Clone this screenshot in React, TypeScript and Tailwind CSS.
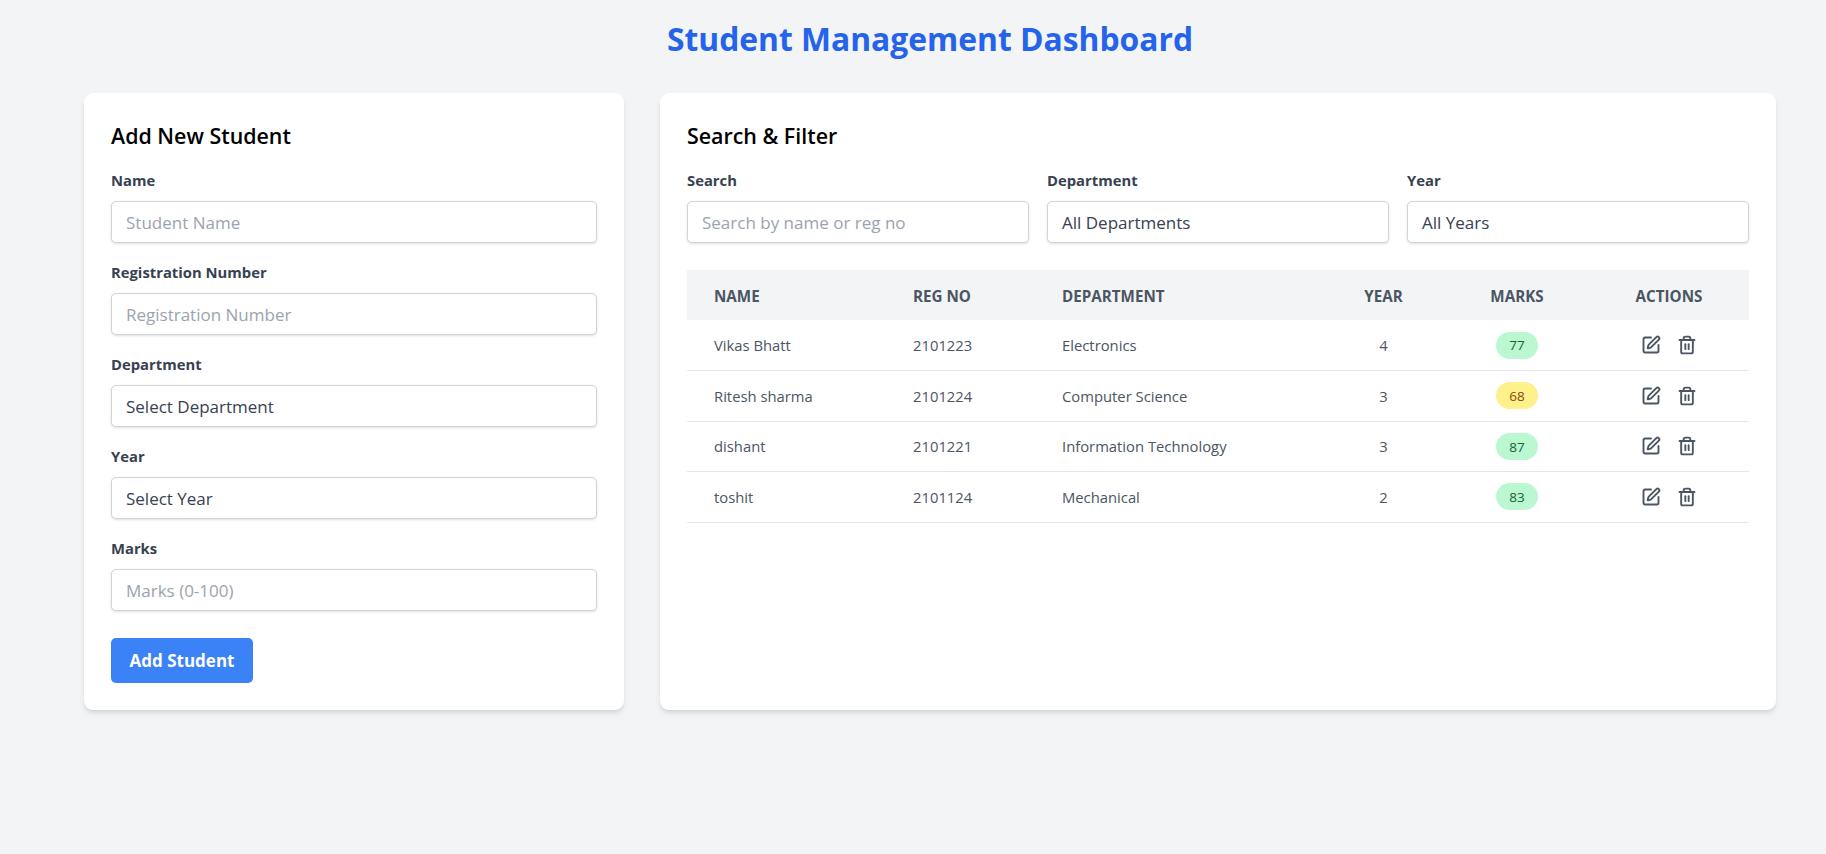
import { SquarePen, Trash2 } from "lucide-react";

const students = [
  { name: "Vikas Bhatt", reg: "2101223", dept: "Electronics", year: 4, marks: 77 },
  { name: "Ritesh sharma", reg: "2101224", dept: "Computer Science", year: 3, marks: 68 },
  { name: "dishant", reg: "2101221", dept: "Information Technology", year: 3, marks: 87 },
  { name: "toshit", reg: "2101124", dept: "Mechanical", year: 2, marks: 83 },
];

function Field({ label, children, className }: { label: string; children: React.ReactNode; className?: string }) {
  return (
    <div className={className}>
      <label className="block h-6 mb-2 text-[14.8px] leading-[22px] font-bold text-[#374151]">{label}</label>
      {children}
    </div>
  );
}

const boxClass =
  "w-full h-[42px] px-[14px] flex items-center bg-white border border-[#d1d5db] rounded-[5px] shadow-sm text-[17px] text-[#374151] placeholder:text-[#9ca3af] outline-none";

function TextBox({ placeholder }: { placeholder: string }) {
  return <input className={boxClass} placeholder={placeholder} />;
}

function SelectBox({ text }: { text: string }) {
  return <div className={`${boxClass} pt-px`}>{text}</div>;
}

export default function App() {
  return (
    <div className="min-h-[854px] bg-[#f3f4f6] pl-[84px] pr-[50px] pt-5 font-['Open_Sans',sans-serif]">
      <h1 className="h-[37px] mb-9 text-[31.8px] leading-[37px] font-bold text-[#2563eb] text-center">Student Management Dashboard</h1>
      <div className="flex gap-9">
        <div className="w-[540px] shrink-0 bg-white rounded-[9px] shadow-md p-[27px]">
          <h2 className="h-8 mb-[17px] text-[21.4px] leading-8 font-semibold text-black">Add New Student</h2>
          <Field label="Name" className="mb-[18px]"><TextBox placeholder="Student Name" /></Field>
          <Field label="Registration Number" className="mb-[18px]"><TextBox placeholder="Registration Number" /></Field>
          <Field label="Department" className="mb-[18px]"><SelectBox text="Select Department" /></Field>
          <Field label="Year" className="mb-[18px]"><SelectBox text="Select Year" /></Field>
          <Field label="Marks" className="mb-[27px]"><TextBox placeholder="Marks (0-100)" /></Field>
          <button className="block w-[142px] h-[45px] bg-[#3b82f6] rounded-[5px] text-white font-bold text-[17px]">Add Student</button>
        </div>
        <div className="flex-1 bg-white rounded-[9px] shadow-md p-[27px]">
          <h2 className="h-8 mb-[17px] text-[21.4px] leading-8 font-semibold text-black">Search &amp; Filter</h2>
          <div className="grid grid-cols-3 gap-[18px] mb-[27px]">
            <Field label="Search"><TextBox placeholder="Search by name or reg no" /></Field>
            <Field label="Department"><SelectBox text="All Departments" /></Field>
            <Field label="Year"><SelectBox text="All Years" /></Field>
          </div>
          <table className="w-full table-fixed border-collapse text-[14.8px] text-[#4b5563]">
            <thead>
              <tr className="h-[50px] bg-[#f3f4f6] text-[15.2px]">
                <th className="w-[226px] pl-[27px] pt-[2px] text-left font-bold uppercase">Name</th>
                <th className="w-[149px] pt-[2px] text-left font-bold uppercase">Reg No</th>
                <th className="w-[260px] pt-[2px] text-left font-bold uppercase">Department</th>
                <th className="w-[123px] pt-[2px] text-center font-bold uppercase">Year</th>
                <th className="w-[144px] pt-[2px] text-center font-bold uppercase">Marks</th>
                <th className="pt-[2px] text-center font-bold uppercase">Actions</th>
              </tr>
            </thead>
            <tbody>
              {students.map((s) => (
                <tr key={s.reg} className="h-[50.5px] border-b border-[#e5e7eb]">
                  <td className="pl-[27px]">{s.name}</td>
                  <td>{s.reg}</td>
                  <td>{s.dept}</td>
                  <td className="text-center">{s.year}</td>
                  <td className="text-center">
                    <span
                      className={
                        s.marks >= 70
                          ? "inline-flex w-[42px] h-[27px] pt-px items-center justify-center rounded-full bg-[#bbf7d0] text-[#166534] text-[13.5px]"
                          : "inline-flex w-[42px] h-[27px] pt-px items-center justify-center rounded-full bg-[#fef08a] text-[#854d0e] text-[13.5px]"
                      }
                    >
                      {s.marks}
                    </span>
                  </td>
                  <td>
                    <div className="flex items-center justify-center gap-4">
                      <SquarePen className="w-5 h-5" strokeWidth={2.25} />
                      <Trash2 className="w-5 h-5" strokeWidth={2.25} />
                    </div>
                  </td>
                </tr>
              ))}
            </tbody>
          </table>
        </div>
      </div>
    </div>
  );
}
